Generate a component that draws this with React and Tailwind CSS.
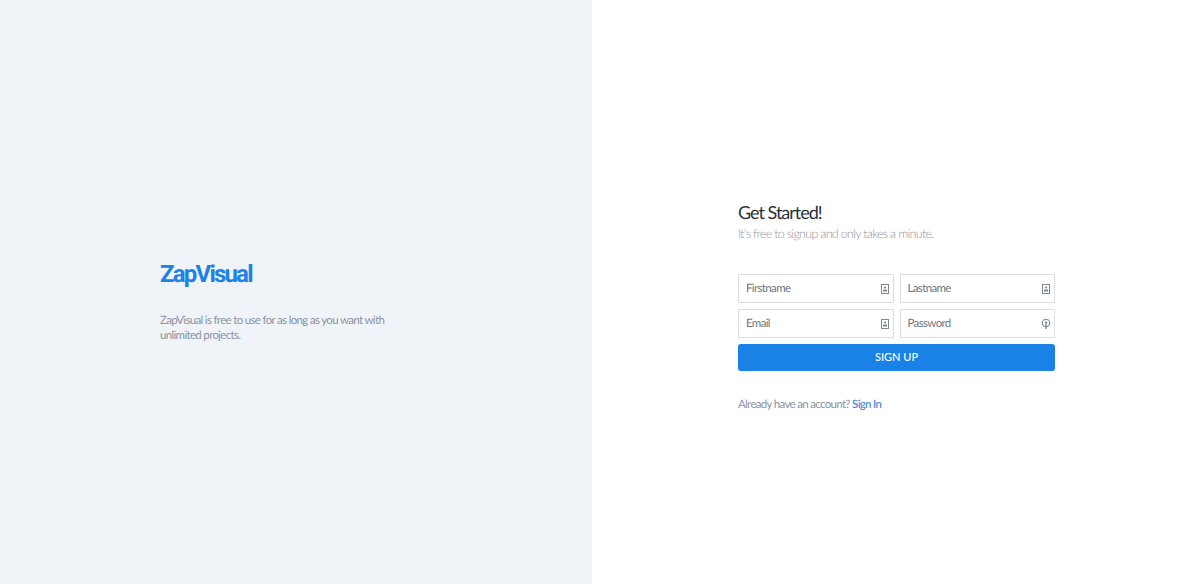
import React from "react";

const BadgeIcon = () => (
  <svg width="10" height="12" viewBox="0 0 10 12" fill="none" className="shrink-0">
    <rect x="1.5" y="1.5" width="7" height="9" stroke="#7b8794" strokeWidth="1" />
    <circle cx="5" cy="4.5" r="1.1" fill="#7b8794" />
    <rect x="3" y="6.5" width="4" height="2" fill="#7b8794" />
  </svg>
);

const KeyIcon = () => (
  <svg width="10" height="12" viewBox="0 0 10 12" fill="none" className="shrink-0">
    <circle cx="5" cy="5" r="3.7" stroke="#7b8794" strokeWidth="1.1" />
    <circle cx="5" cy="4.6" r="1.2" fill="#7b8794" />
    <path d="M5 5.5V11" stroke="#7b8794" strokeWidth="1.4" />
  </svg>
);

function Field({ placeholder, icon, type = "text" }) {
  return (
    <div className="flex h-[29px] items-center border border-[#dcdee0] pl-[7px] pr-[3px]">
      <input
        type={type}
        placeholder={placeholder}
        className="w-full min-w-0 bg-transparent text-[11.5px] tracking-[-0.64px] text-[#6b7280] outline-none [text-rendering:geometricPrecision] placeholder:text-[#6f7680]"
      />
      {icon}
    </div>
  );
}

export default function App() {
  return (
    <div className="flex h-[584px] w-full font-['Lato','Liberation_Sans',sans-serif] [text-rendering:geometricPrecision]">
      {/* Left panel */}
      <div className="flex w-[592px] shrink-0 flex-col bg-[#f0f3f8] pl-[160px] pt-[259px]">
        <div className="font-['Roboto','Liberation_Sans',sans-serif] text-[24px] leading-[30px] font-bold tracking-[-1.8px] text-[#1e82e4]">
          ZapVisual
        </div>
        <p className="mt-[24px] w-[240px] text-[11.5px] leading-[15px] tracking-[-0.67px] text-[#8a93a3]">
          ZapVisual is free to use for as long as you want with unlimited projects.
        </p>
      </div>

      {/* Right panel */}
      <div className="flex flex-1 flex-col bg-white pl-[146px] pt-[201px]">
        <div className="w-[317px]">
          <h1 className="text-[18px] leading-[22px] font-normal tracking-[-1px] text-[#2a3038]">Get Started!</h1>
          <p className="mt-[2px] text-[12.5px] leading-[17px] font-light tracking-[-0.7px] text-[#8f96a3]">
            It's free to signup and only takes a minute.
          </p>

          <div className="mt-[32px] grid grid-cols-2 gap-x-[6px] gap-y-[6px]">
            <Field placeholder="Firstname" icon={<BadgeIcon />} />
            <Field placeholder="Lastname" icon={<BadgeIcon />} />
            <Field placeholder="Email" type="email" icon={<BadgeIcon />} />
            <Field placeholder="Password" type="password" icon={<KeyIcon />} />
          </div>

          <button className="mt-[6px] h-[27px] w-full rounded-[3px] bg-[#1a82e6] text-[11px] font-medium text-white">
            SIGN UP
          </button>

          <p className="mt-[26px] text-[11.5px] leading-[15px] tracking-[-0.68px] text-[#8a93a3]">
            Already have an account?{" "}
            <a href="#" className="font-medium text-[#3f87d6]">
              Sign In
            </a>
          </p>
        </div>
      </div>
    </div>
  );
}
